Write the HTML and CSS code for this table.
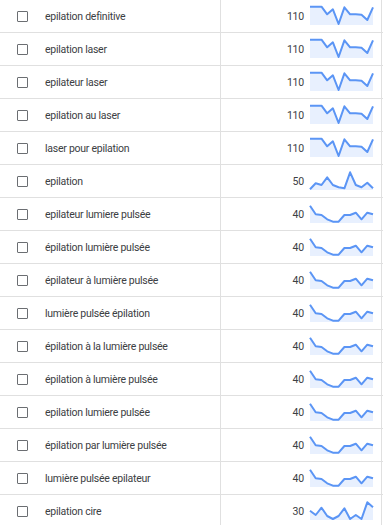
FILE: index.html
```html
<!DOCTYPE html>
<html>
	<head>
		<meta charset="utf-8">
		<title>Idées de mots clés</title>
		<link rel="stylesheet" href="styles.css">
	</head>
	<body>
		<div id="keywords" class="kw-list"></div>
		<script>
			// courbes de tendance sur 12 mois (0 = haut, 20 = bas)
			var trends = {
				a: [1.7, 1.7, 1.7, 9.3, 4.3, 19, 2.3, 9.3, 9.3, 9.7, 15, 2.3],
				b: [19.3, 13.3, 15, 7.3, 15, 17.3, 18.3, 2.3, 15, 17.3, 12.7, 18.3],
				c: [2.7, 11.3, 12, 16.3, 18.7, 18.7, 12, 12, 9.7, 16.3, 9.7, 11.3],
				d: [10.7, 15, 7.7, 16, 19, 16, 8.3, 19, 15, 19, 2.3, 7.3]
			};

			var rows = [
				["epilation definitive", 110, "a"],
				["epilation laser", 110, "a"],
				["epilateur laser", 110, "a"],
				["epilation au laser", 110, "a"],
				["laser pour epilation", 110, "a"],
				["epilation", 50, "b"],
				["epilateur lumiere pulsée", 40, "c"],
				["épilation lumière pulsée", 40, "c"],
				["épilateur à lumière pulsée", 40, "c"],
				["lumière pulsée épilation", 40, "c"],
				["épilation à la lumière pulsée", 40, "c"],
				["épilation à lumière pulsée", 40, "c"],
				["epilation lumiere pulsée", 40, "c"],
				["épilation par lumière pulsée", 40, "c"],
				["lumière pulsée epilateur", 40, "c"],
				["epilation cire", 30, "d"]
			];

			function sparkline(data) {
				var step = 63 / (data.length - 1);
				var pts = data.map(function(y, i) {
					return (1 + i * step).toFixed(1) + "," + y;
				}).join(" ");
				var area = "1,20 " + pts + " 64,20";
				return '<svg class="spark" viewBox="0 0 65 20" width="65" height="20">' +
					'<polygon class="spark-fill" points="' + area + '"/>' +
					'<polyline class="spark-line" points="' + pts + '"/>' +
					'</svg>';
			}

			var list = document.getElementById("keywords");
			rows.forEach(function(r) {
				var row = document.createElement("div");
				row.className = "kw-row";
				row.innerHTML =
					'<div class="kw-cell"><span class="box"></span><span class="kw-text">' + r[0] + '</span></div>' +
					'<div class="vol-cell"><span class="vol">' + r[1] + '</span>' + sparkline(trends[r[2]]) + '</div>' +
					'<div class="rest"></div>';
				list.appendChild(row);
			});
		</script>
	</body>
</html>
```

FILE: styles.css
```css
html, body {margin: 0px; padding: 0px; background: #fff;}
body {font-family: Roboto, "Liberation Sans", Arial, sans-serif; color: #3c4043; overflow: hidden;}

.kw-row {display: grid; grid-template-columns: 221px 161px 1fr; height: 33px; box-sizing: border-box; border-bottom: 1px solid #e0e0e0;}

.kw-cell {display: flex; align-items: center; padding-left: 17px; border-right: 1px solid #e0e0e0; box-sizing: border-box;}
.box {width: 11px; height: 11px; box-sizing: border-box; border: 1.5px solid #6b6e72; border-radius: 1px; flex: none;}
.kw-text {margin-left: 17px; font-size: 10.5px; letter-spacing: -0.25px; white-space: nowrap;}

.vol-cell {display: flex; align-items: center; justify-content: flex-end; padding-right: 7px; border-right: 1px solid #e0e0e0; box-sizing: border-box;}
.vol {font-size: 10.5px; letter-spacing: -0.2px; margin-right: 5px;}
.spark {display: block; margin-top: -2px;}
.spark-fill {fill: #e8f0fe;}
.spark-line {fill: none; stroke: #5b95f5; stroke-width: 2; stroke-linejoin: round;}
```
